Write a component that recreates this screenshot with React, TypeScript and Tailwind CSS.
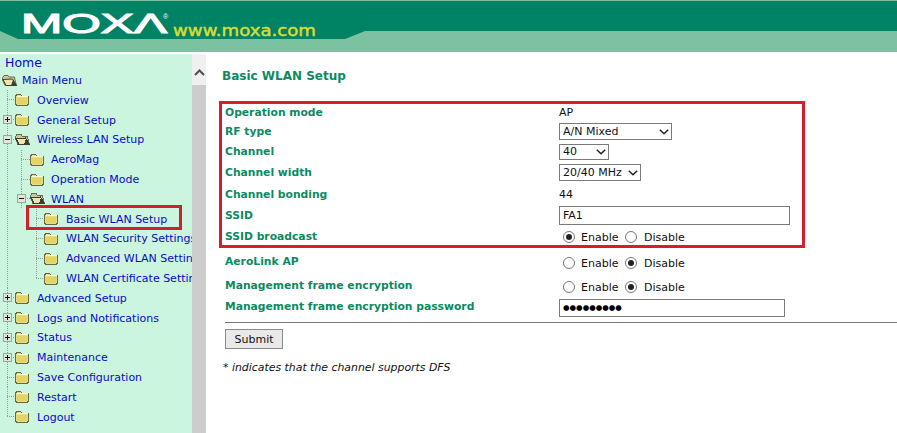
import React from "react";

const FONT = "font-['DejaVu_Sans','Verdana',sans-serif]";

function ClosedFolder({ x, y }: { x: number; y: number }) {
  return (
    <g transform={`translate(${x} ${y})`}>
      <path d="M0.5 3.5 L1.5 1.5 L5.5 1.5 L6.5 3 L12.5 3 L13.5 4 L13.5 11 L12.5 12 L1.5 12 L0.5 11 Z" fill="#e8dc80" stroke="#6a6748" strokeWidth="1" />
      <path d="M1.5 3.5 L12.5 3.5" stroke="#fbf7d0" strokeWidth="1" />
      <rect x="2" y="5" width="10" height="6" fill="#e2d565" />
    </g>
  );
}

function OpenFolder({ x, y }: { x: number; y: number }) {
  return (
    <g transform={`translate(${x} ${y})`}>
      <path d="M0.5 4 L2 1.5 L6 1.5 L7 3 L12.5 3 L13 6 L14.5 11.5 L3 11.5 L0.5 6 Z" fill="#c9c9a0" stroke="#6b6b52" strokeWidth="1" />
      <path d="M1 5.5 L10.5 5 L14.5 11.5 L4 11.5 Z" fill="#ece7b0" stroke="#3d3d2e" strokeWidth="1" />
      <path d="M11 6 L14.5 11.5 L9 11.5 Z" fill="#3d3d2e" />
    </g>
  );
}

function Box({ x, y, plus }: { x: number; y: number; plus: boolean }) {
  return (
    <g>
      <rect x={x + 0.5} y={y + 0.5} width="8" height="8" fill="#dfe8d8" stroke="#98a898" />
      <path d={`M${x + 2} ${y + 4.5} H${x + 7}`} stroke="#111" />
      {plus && <path d={`M${x + 4.5} ${y + 2} V${y + 7}`} stroke="#111" />}
    </g>
  );
}

type Item = {
  label: string;
  level: 0 | 1 | 2;
  box?: "plus" | "minus";
  open?: boolean;
  guides: number[];
  last?: boolean;
};

const items: Item[] = [
  { label: "Overview", level: 0, guides: [7] },
  { label: "General Setup", level: 0, box: "plus", guides: [7] },
  { label: "Wireless LAN Setup", level: 0, box: "minus", open: true, guides: [7] },
  { label: "AeroMag", level: 1, guides: [7, 21] },
  { label: "Operation Mode", level: 1, guides: [7, 21] },
  { label: "WLAN", level: 1, box: "minus", open: true, guides: [7, 21] },
  { label: "Basic WLAN Setup", level: 2, guides: [7, 36] },
  { label: "WLAN Security Settings", level: 2, guides: [7, 36] },
  { label: "Advanced WLAN Settings", level: 2, guides: [7, 36] },
  { label: "WLAN Certificate Settings", level: 2, guides: [7, 36], last: true },
  { label: "Advanced Setup", level: 0, box: "plus", guides: [7] },
  { label: "Logs and Notifications", level: 0, box: "plus", guides: [7] },
  { label: "Status", level: 0, box: "plus", guides: [7] },
  { label: "Maintenance", level: 0, box: "plus", guides: [7] },
  { label: "Save Configuration", level: 0, guides: [7] },
  { label: "Restart", level: 0, guides: [7] },
  { label: "Logout", level: 0, guides: [7], last: true },
];

const gutterW = [37, 51, 66];
const folderX = [15, 30, 44];
const connectorX = [7, 21, 36];

function TreeRow({ item }: { item: Item }) {
  const h = 20;
  const w = gutterW[item.level];
  const cx = connectorX[item.level];
  return (
    <div className="flex h-[19.8px] items-center whitespace-nowrap">
      <svg width={w} height={20} className="shrink-0" shapeRendering="crispEdges">
        {item.guides.map((g) => (
          <path
            key={g}
            d={`M${g + 0.5} 0 V${g === cx && item.last ? 10 : h}`}
            stroke="#8f9f95"
            strokeDasharray="1 1"
          />
        ))}
        <path d={`M${cx} 9.5 H${folderX[item.level]}`} stroke="#8f9f95" strokeDasharray="1 1" />
        {item.box && <Box x={cx - 4} y={5} plus={item.box === "plus"} />}
        {item.open ? <OpenFolder x={folderX[item.level]} y={3} /> : <ClosedFolder x={folderX[item.level]} y={3} />}
      </svg>
      <span className="text-[11px] leading-none text-[#0a0ac4]">{item.label}</span>
    </div>
  );
}

function Sidebar() {
  return (
    <aside className="relative w-[192px] shrink-0 overflow-hidden bg-[#cbf5df]">
      <div className="flex h-[16.7px] items-center pl-[5px] pt-[2px] text-[12.5px] leading-none text-[#0a0ac4]">Home</div>
      <div className="flex h-[19.8px] items-center whitespace-nowrap">
        <svg width={22} height={20} className="shrink-0">
          <OpenFolder x={2} y={3} />
        </svg>
        <span className="text-[11px] leading-none text-[#0a0ac4]">Main Menu</span>
      </div>
      {items.map((it) => (
        <TreeRow key={it.label} item={it} />
      ))}
      <div className="absolute left-[26px] top-[151px] h-[25px] w-[156px] border-[3px] border-[#d0202c]" />
    </aside>
  );
}

function Scrollbar() {
  return (
    <div className="flex w-[14px] shrink-0 flex-col bg-[#f0f0f0]">
      <div className="flex h-[31px] items-start justify-center pt-[15px]">
        <svg width="11" height="7" viewBox="0 0 11 7">
          <path d="M1 6 L5.5 1.5 L10 6" fill="none" stroke="#505050" strokeWidth="2" />
        </svg>
      </div>
      <div className="flex-1 bg-[#cdcdcd]" />
    </div>
  );
}

function Row({ h, label, low, children }: { h: string; label: string; low?: boolean; children?: React.ReactNode }) {
  return (
    <div className={`flex items-center ${h}`}>
      <div className={`w-[334px] shrink-0 text-[10.75px] font-bold leading-none text-[#0b8a62] ${low ? "translate-y-[1px]" : ""}`}>{label}</div>
      {children}
    </div>
  );
}

function Value({ children }: { children: React.ReactNode }) {
  return <span className="text-[11px] leading-none text-[#111]">{children}</span>;
}

function Chevron() {
  return (
    <svg width="10" height="6" viewBox="0 0 10 6" className="pointer-events-none absolute right-[3px] top-1/2 -translate-y-1/2">
      <path d="M0.8 0.8 L5 4.8 L9.2 0.8" fill="none" stroke="#222" strokeWidth="1.5" />
    </svg>
  );
}

function Select({ w, h, value }: { w: string; h: string; value: string }) {
  return (
    <div className={`relative ${w} ${h}`}>
      <select
        defaultValue={value}
        className={`block h-full w-full appearance-none rounded-none border border-[#7a7a7a] bg-white pl-[3px] text-[11px] leading-none text-[#111] outline-none ${FONT}`}
      >
        <option>{value}</option>
      </select>
      <Chevron />
    </div>
  );
}

function Radio({ on }: { on: boolean }) {
  return (
    <span className="flex h-[12px] w-[12px] shrink-0 items-center justify-center rounded-full border border-[#777] bg-white">
      {on && <span className="h-[6px] w-[6px] rounded-full bg-[#222]" />}
    </span>
  );
}

function Radios({ enable, down }: { enable: boolean; down?: boolean }) {
  return (
    <div className={`flex items-center pl-[4px] text-[11px] leading-none text-[#111] ${down ? "pt-[1px]" : ""}`}>
      <Radio on={enable} />
      <span className="ml-[6px] mt-[1px] w-[44px]">Enable</span>
      <Radio on={!enable} />
      <span className="ml-[7px] mt-[1px]">Disable</span>
    </div>
  );
}

function Main() {
  return (
    <main className="relative flex-1 bg-white pl-[16px]">
      <h1 className="flex h-[44px] items-center text-[12px] font-bold leading-none text-[#0b8a62]">Basic WLAN Setup</h1>
      <div className="pl-[3px]">
        <div className="h-[5px]" />
        <Row h="h-[19px]" low label="Operation mode"><Value>AP</Value></Row>
        <Row h="h-[19px]" low label="RF type"><Select w="w-[113px]" h="h-[17px]" value="A/N Mixed" /></Row>
        <Row h="h-[21px]" low label="Channel"><Select w="w-[50px]" h="h-[16px]" value="40" /></Row>
        <Row h="h-[21px]" low label="Channel width"><Select w="w-[82px]" h="h-[17px]" value="20/40 MHz" /></Row>
        <Row h="h-[22px]" low label="Channel bonding"><Value>44</Value></Row>
        <Row h="h-[21px]" low label="SSID">
          <div className="flex h-[19px] w-[231px] items-center border border-[#7a7a7a] pl-[3px] text-[11px] leading-none text-[#111]">FA1</div>
        </Row>
        <Row h="h-[21px]" low label="SSID broadcast"><Radios enable down /></Row>
        <Row h="h-[31px]" label="AeroLink AP"><Radios enable={false} /></Row>
        <Row h="h-[17px]" label="Management frame encryption"><Radios enable={false} down /></Row>
        <Row h="h-[25px]" label="Management frame encryption password">
          <div className="flex h-[18px] w-[226px] items-center border border-[#7a7a7a] pl-[3px] text-[7.5px] leading-none text-black">●●●●●●●●●</div>
        </Row>
        <div className="mt-[2px] border-t border-[#777]" />
        <button className={`mt-[6px] block h-[20px] w-[58px] rounded-none border border-[#8a8a8a] bg-[#e9e9e9] text-[11px] leading-none text-[#111] ${FONT}`}>Submit</button>
      </div>
      <p className="ml-[1px] mt-[14px] text-[10.9px] italic leading-none text-[#111]">* indicates that the channel supports DFS</p>
      <div className="absolute left-[13px] top-[47px] h-[147px] w-[586px] border-[3px] border-[#d0202c]" />
    </main>
  );
}

function Header() {
  return (
    <header className="h-[52px] bg-[#7cc2a0]">
      <svg width="897" height="52" viewBox="0 0 897 52" className="block">
        <path d="M0 1 H897 V31 H365 L345 39 H18 L0 31 Z" fill="#008264" />
        <text x="21" y="33" textLength="146" lengthAdjust="spacingAndGlyphs" fontFamily="'Liberation Sans',sans-serif" fontSize="27.5" fontWeight="400" fill="#fff" stroke="#fff" strokeWidth="1.1">MOXΛ</text>
        <text x="163" y="19" fontFamily="'Liberation Sans',sans-serif" fontSize="7" fill="#fff">®</text>
        <text x="173" y="35.5" textLength="143" lengthAdjust="spacingAndGlyphs" fontFamily="'DejaVu Sans',sans-serif" fontSize="16.5" fontWeight="400" fill="#d8dc34" stroke="#d8dc34" strokeWidth="0.5">www.moxa.com</text>
      </svg>
    </header>
  );
}

export default function App() {
  return (
    <div className={`flex h-[433px] w-[897px] flex-col overflow-hidden bg-white ${FONT}`}>
      <Header />
      <div className="h-[2px]" />
      <div className="flex min-h-0 flex-1">
        <Sidebar />
        <Scrollbar />
        <Main />
      </div>
    </div>
  );
}
